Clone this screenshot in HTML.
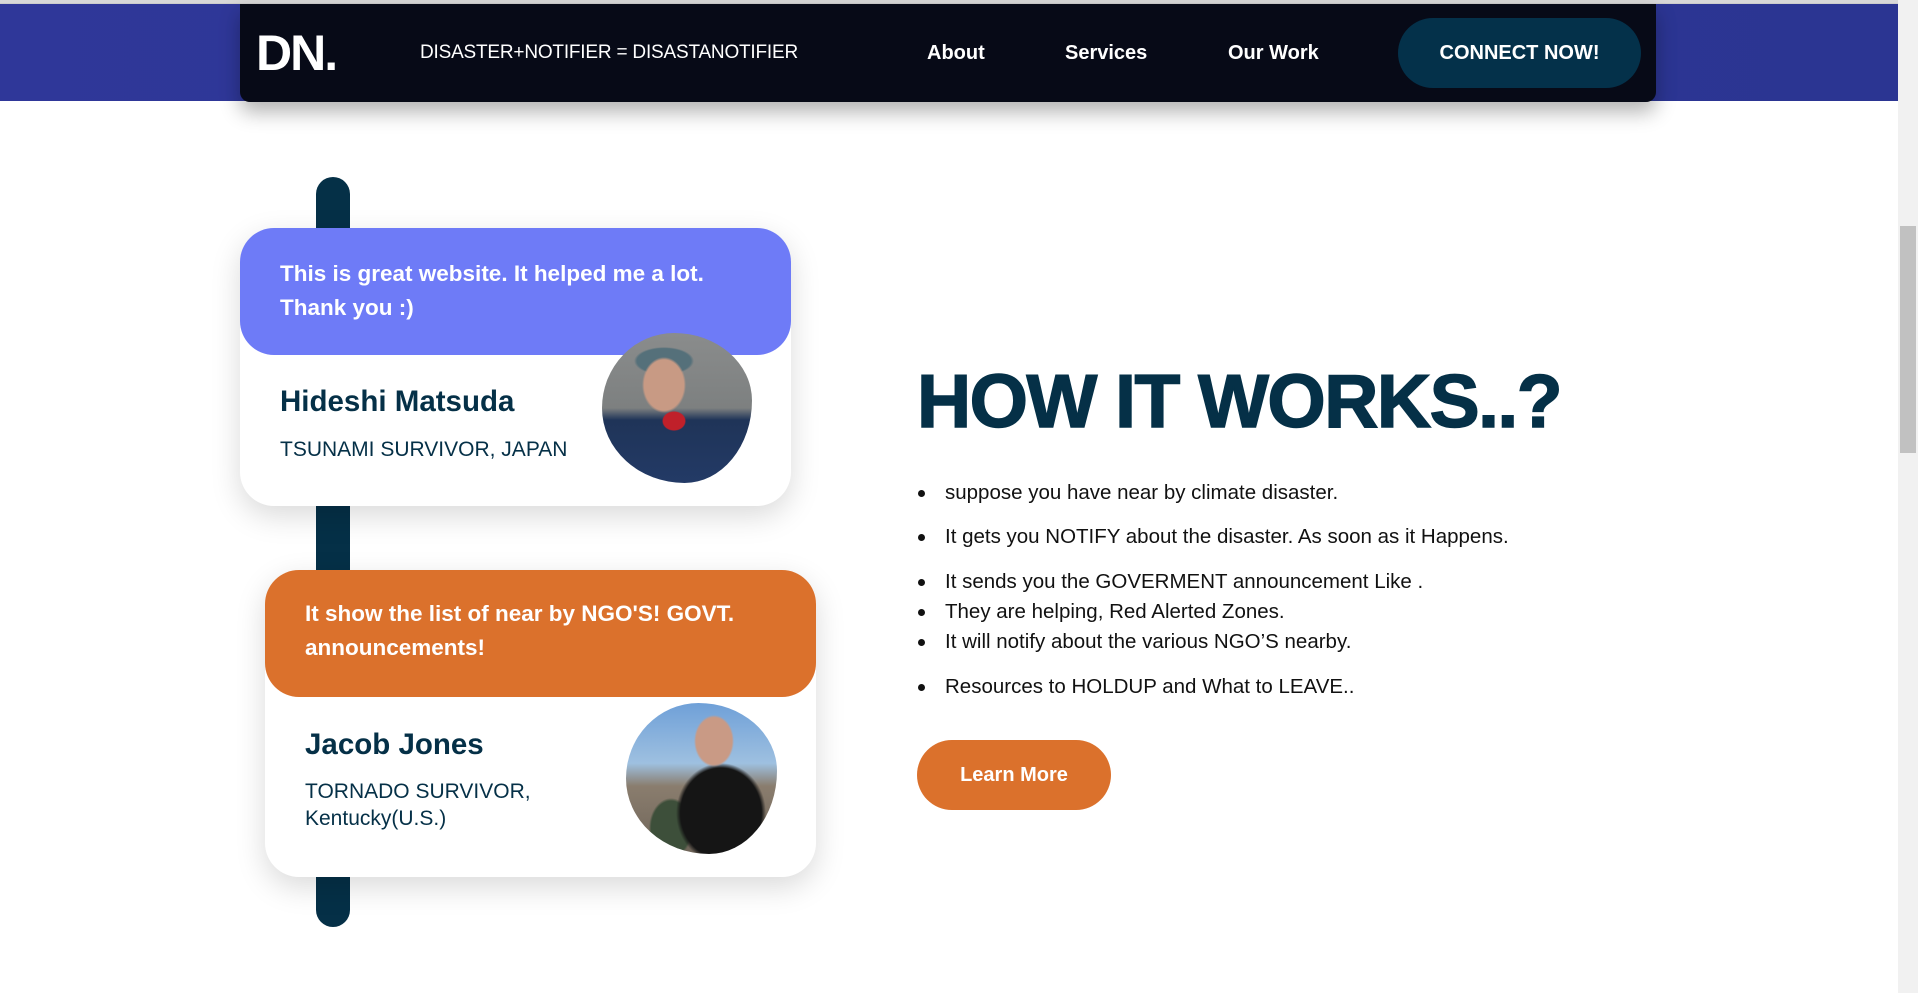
<!DOCTYPE html>
<html><head><meta charset="utf-8"><style>
*{margin:0;padding:0;box-sizing:border-box}
body{width:1918px;height:993px;overflow:hidden;background:#fff;font-family:"Liberation Sans",sans-serif;position:relative}
.band{position:absolute;left:0;top:3px;width:1898px;height:98px;background:linear-gradient(90deg,#2f3799,#2b3592);border-top:1px solid #ccc}
.topline{position:absolute;left:0;top:0;width:1918px;height:3px;background:#d8d8d8}
.nav{position:absolute;left:240px;top:4px;width:1416px;height:98px;background:#070a17;border-radius:0 0 10px 10px;box-shadow:0 10px 20px rgba(0,0,0,.3)}
.nav .logo{position:absolute;left:16px;top:24px;color:#fff;font-weight:bold;font-size:50px;letter-spacing:-2px;line-height:50px}
.nav .tag{position:absolute;left:180px;top:38px;color:#fff;font-size:19px;line-height:22px;letter-spacing:-0.2px}
.nav a{position:absolute;top:38px;color:#fff;font-weight:bold;font-size:20px;line-height:22px;text-decoration:none}
.btn{position:absolute;left:1158px;top:14px;width:243px;height:70px;border-radius:35px;background:#04314a;color:#fff;font-weight:bold;font-size:20px;display:flex;align-items:center;justify-content:center}
.scroll{position:absolute;left:1898px;top:0;width:20px;height:993px;background:#f1f1f1}
.thumb{position:absolute;left:1900px;top:226px;width:16px;height:227px;background:#c1c1c1}
.bar{position:absolute;left:316px;top:177px;width:34px;height:750px;background:#053047;border-radius:17px}
.card{position:absolute;background:#fff;border-radius:34px;box-shadow:0 10px 30px rgba(0,0,0,.15);overflow:visible}
.card .top{position:absolute;left:0;top:0;width:100%;border-radius:34px;color:#fff;font-weight:bold;font-size:22.5px;line-height:34px;padding:29px 0 0 40px;letter-spacing:0px}
.card .name{position:absolute;left:40px;color:#053047;font-weight:bold;font-size:29.5px;line-height:34px}
.card .sub{position:absolute;left:40px;color:#053047;font-size:21px;line-height:27px;font-weight:300}
.photo{position:absolute;border-radius:48% 52% 45% 55%/50% 45% 55% 50%;overflow:hidden}
h1{position:absolute;left:917px;top:356px;font-size:75px;line-height:90px;color:#053047;font-weight:900;letter-spacing:-1.5px;white-space:nowrap;-webkit-text-stroke:1.5px #053047}
.li{position:absolute;left:945px;font-size:20.5px;line-height:24px;color:#111;white-space:nowrap}
.li:before{content:"";position:absolute;left:-27px;top:9px;width:7px;height:7px;border-radius:50%;background:#111}
.learn{position:absolute;left:917px;top:740px;width:194px;height:70px;border-radius:35px;background:#db712c;color:#fff;font-weight:bold;font-size:20px;display:flex;align-items:center;justify-content:center}
</style></head><body>
<div class="topline"></div>
<div class="band"></div>
<div class="nav">
<div class="logo">DN.</div>
<div class="tag">DISASTER+NOTIFIER = DISASTANOTIFIER</div>
<a style="left:687px">About</a>
<a style="left:825px">Services</a>
<a style="left:988px">Our Work</a>
<div class="btn">CONNECT NOW!</div>
</div>
<div class="scroll"></div><div class="thumb"></div>
<div class="bar"></div>

<div class="card" style="left:240px;top:228px;width:551px;height:278px">
<div class="top" style="height:127px;background:#6e7bf7">This is great website. It helped me a lot.<br>Thank you :)</div>
<div class="name" style="top:157px">Hideshi Matsuda</div>
<div class="sub" style="top:208px">TSUNAMI SURVIVOR, JAPAN</div>
<div class="photo" style="left:362px;top:105px;width:150px;height:150px;background:
radial-gradient(ellipse 22px 28px at 62px 52px,#c89a84 0 90%,transparent 100%),
radial-gradient(ellipse 30px 14px at 62px 28px,#55707a 0 90%,transparent 100%),
radial-gradient(ellipse 12px 10px at 72px 88px,#c0202a 0 90%,transparent 100%),
linear-gradient(180deg,#8a8c8c 0,#7d8080 50%,#1f3458 58%,#233a66 100%)"></div>
</div>

<div class="card" style="left:265px;top:570px;width:551px;height:307px">
<div class="top" style="height:127px;background:#db712c;padding-top:27px">It show the list of near by NGO'S! GOVT.<br>announcements!</div>
<div class="name" style="top:158px">Jacob Jones</div>
<div class="sub" style="top:208px">TORNADO SURVIVOR,<br>Kentucky(U.S.)</div>
<div class="photo" style="left:361px;top:133px;width:151px;height:151px;background:
radial-gradient(ellipse 20px 26px at 88px 38px,#c99a85 0 90%,transparent 100%),
radial-gradient(ellipse 45px 50px at 95px 110px,#151515 0 90%,transparent 100%),
radial-gradient(ellipse 22px 30px at 45px 125px,#3d4f3a 0 90%,transparent 100%),
linear-gradient(180deg,#6fa0d8 0,#9ec0e0 40%,#8a7d6e 55%,#6e6458 100%)"></div>
</div>

<h1>HOW IT WORKS..?</h1>
<div class="li" style="top:481px">suppose you have near by climate disaster.</div>
<div class="li" style="top:525px">It gets you NOTIFY about the disaster. As soon as it Happens.</div>
<div class="li" style="top:570px">It sends you the GOVERMENT announcement Like .</div>
<div class="li" style="top:600px">They are helping, Red Alerted Zones.</div>
<div class="li" style="top:630px">It will notify about the various NGO’S nearby.</div>
<div class="li" style="top:675px">Resources to HOLDUP and What to LEAVE..</div>
<div class="learn">Learn More</div>
</body></html>
